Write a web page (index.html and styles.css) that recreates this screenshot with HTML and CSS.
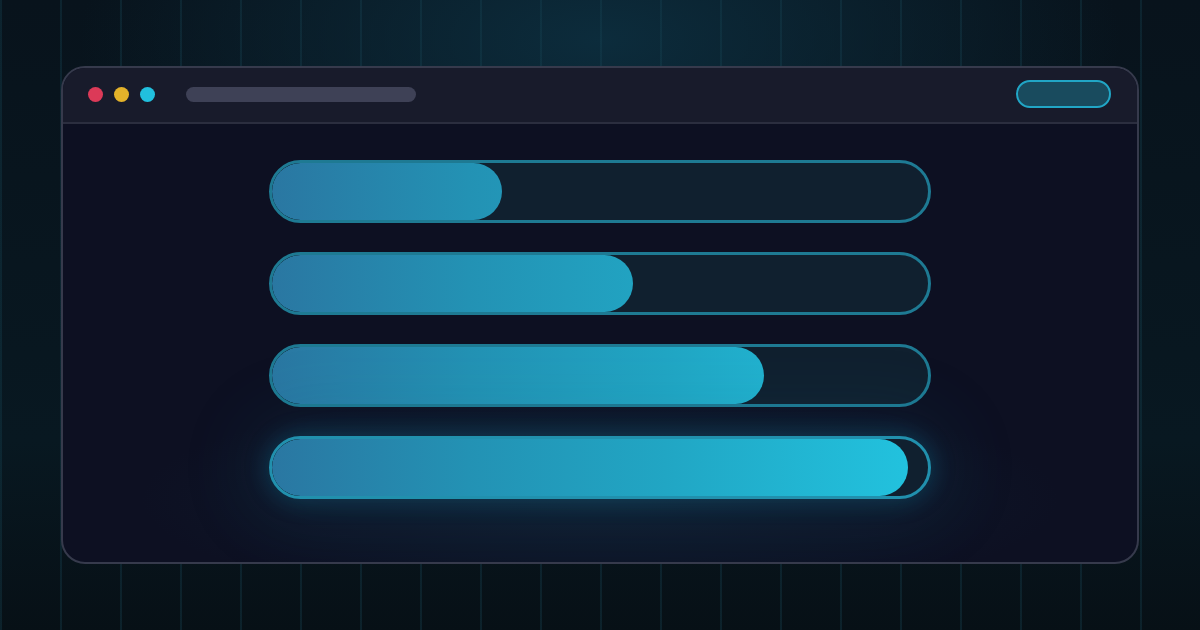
FILE: index.html
```html
<!DOCTYPE html>
<html>
<head>
<meta charset="utf-8">
<link rel="stylesheet" href="styles.css">
</head>
<body>
<div class="page">
  <div class="window">
    <div class="titlebar">
      <div class="dots">
        <span class="dot red"></span>
        <span class="dot yellow"></span>
        <span class="dot cyan"></span>
      </div>
      <div class="address"></div>
      <div class="spacer"></div>
      <div class="btn"></div>
    </div>
    <div class="content">
      <div class="track"><div class="fill" style="width:35%"></div></div>
      <div class="track"><div class="fill" style="width:55%"></div></div>
      <div class="track"><div class="fill" style="width:75%"></div></div>
      <div class="track glow"><div class="fill" style="width:97%"></div></div>
    </div>
  </div>
</div>
</body>
</html>
```
FILE: styles.css
```css
html, body {
  margin: 0;
  padding: 0;
  width: 1200px;
  height: 630px;
  overflow: hidden;
  font-family: "Inter", "Liberation Sans", sans-serif;
}
.page {
  width: 1200px;
  height: 630px;
  box-sizing: border-box;
  padding: 66px 61px;
  background:
    repeating-linear-gradient(90deg, rgba(24, 70, 86, 0.32) 0 2px, transparent 2px 60px),
    radial-gradient(ellipse 520px 240px at 600px 40px, #0c2c3c 0%, rgba(12, 44, 60, 0) 100%),
    linear-gradient(180deg, #08131c 0%, #081821 70%, #071016 100%);
  background-position: 60px 0, 0 0, 0 0;
}
.window {
  height: 498px;
  box-sizing: border-box;
  border: 2px solid #363a4c;
  border-radius: 24px;
  background: #0d1022;
  overflow: hidden;
  display: flex;
  flex-direction: column;
}
.titlebar {
  height: 56px;
  flex: none;
  box-sizing: border-box;
  border-bottom: 2px solid #2b2e3f;
  background: #181b2b;
  display: flex;
  align-items: center;
  padding: 0 26px 2px 25px;
}
.dots {
  display: flex;
  gap: 11px;
}
.dot {
  width: 15px;
  height: 15px;
  border-radius: 50%;
}
.red { background: #dc3a58; }
.yellow { background: #e3b22a; }
.cyan { background: #21c0de; }
.address {
  margin-left: 31px;
  width: 230px;
  height: 15px;
  border-radius: 8px;
  background: #3e4156;
}
.spacer { flex: 1; }
.btn {
  width: 91px;
  height: 24px;
  border: 2px solid #21a6c6;
  border-radius: 14px;
  background: #194b5e;
}
.content {
  flex: 1;
  display: flex;
  flex-direction: column;
  align-items: center;
  gap: 29px;
  padding-top: 36px;
  background: radial-gradient(ellipse 460px 110px at 50% 375px, rgba(20, 60, 80, 0.3) 0%, rgba(20, 60, 80, 0) 100%);
}
.track {
  width: 662px;
  height: 63px;
  box-sizing: border-box;
  border: 3px solid #1e7a93;
  border-radius: 32px;
  background: #10202f;
  overflow: hidden;
  flex: none;
}
.track.glow {
  border-color: #2190ad;
  box-shadow: 0 0 22px 4px rgba(28, 150, 190, 0.22), 0 0 70px 24px rgba(20, 100, 130, 0.14);
}
.fill {
  height: 100%;
  border-radius: 29px;
  background: linear-gradient(90deg, #2a77a2 0%, #2392b4 30%, #21a6c4 60%, #22c4e0 100%);
  background-size: 656px 100%;
  background-repeat: no-repeat;
}
```
